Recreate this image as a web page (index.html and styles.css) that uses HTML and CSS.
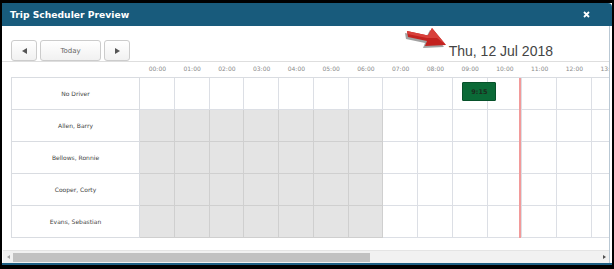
FILE: index.html
```html
<!DOCTYPE html>
<html lang="en">
<head>
    <meta charset="UTF-8">
    <meta name="viewport" content="width=device-width, initial-scale=1.0">
    <title>Trip Scheduler Preview</title>
    <link rel="stylesheet" href="styles.css">
</head>
<body>
    <div class="frame">
        <div class="dialog">
            <div class="dialog-header">
                <span class="dialog-title">Trip Scheduler Preview</span>
                <span class="dialog-close">
                    <svg width="7" height="7" viewBox="0 0 7 7"><path d="M1 1L6 6M6 1L1 6" stroke="#fff" stroke-width="1.8"/></svg>
                </span>
            </div>
            <div class="dialog-body">
                <div class="toolbar">
                    <button class="nav-btn"><span class="tri tri-left"></span></button>
                    <button class="nav-btn today-btn">Today</button>
                    <button class="nav-btn"><span class="tri tri-right"></span></button>
                    <div class="current-date">Thu, 12 Jul 2018</div>
                </div>
                <div class="scheduler">
                    <div class="time-header" id="timeHeader">
                        <div class="corner"></div>
                    </div>
                    <div class="sched-body" id="schedBody">
                        <div class="now-line"></div>
                    </div>
                </div>
                <div class="hscroll">
                    <div class="hscroll-btn"><span class="sb-tri sb-left"></span></div>
                    <div class="hscroll-thumb"></div>
                    <div class="hscroll-btn hscroll-end"><span class="sb-tri sb-right"></span></div>
                </div>
            </div>
        </div>
        <svg class="callout-arrow" width="56" height="32" viewBox="398 22 56 32">
            <polygon points="405,33 426,37.5 430,30 444,47 423,48 425,43 406,39" fill="#555" opacity="0.55"/>
            <polygon points="407,31 428,35.5 432,28 446,45 425,46 427,41 408,37" fill="#c3221f"/>
            <polygon points="407,31 428,35.5 432,28 446,45 437,38 427,38 407.5,34" fill="#d8403b"/>
        </svg>
    </div>

    <script>
        const drivers = ["No Driver", "Allen, Barry", "Bellows, Ronnie", "Cooper, Corty", "Evans, Sebastian"];
        const trips = [{ driver: 0, start: 9.25, label: "9:15" }];
        const visibleHours = 14;  // the rest is off to the right of the scroll area

        function buildHeader() {
            const header = document.getElementById("timeHeader");
            for (let h = 0; h < visibleHours; h++) {
                const cell = document.createElement("div");
                cell.className = "hour-label";
                cell.textContent = String(h).padStart(2, "0") + ":00";
                header.appendChild(cell);
            }
        }

        function buildRows() {
            const body = document.getElementById("schedBody");
            drivers.forEach((name, i) => {
                const row = document.createElement("div");
                row.className = "sched-row";
                row.innerHTML = `<div class="driver-cell">${name}</div>`;
                for (let h = 0; h < visibleHours; h++) {
                    const cell = document.createElement("div");
                    cell.className = "hour-cell";
                    if (i > 0 && h < 7) cell.classList.add("off-hours");
                    row.appendChild(cell);
                }
                trips.filter(t => t.driver === i).forEach(t => {
                    const trip = document.createElement("div");
                    trip.className = "trip";
                    trip.style.left = (129 + t.start * 34.75 + 1) + "px";
                    trip.textContent = t.label;
                    row.appendChild(trip);
                });
                body.appendChild(row);
            });
        }

        buildHeader();
        buildRows();
    </script>
</body>
</html>
```

FILE: styles.css
```css
body {
    margin: 0;
    background-color: #000000;
    font-family: "DejaVu Sans", Verdana, sans-serif;
}

.frame {
    position: relative;
    width: 614px;
    height: 269px;
    box-sizing: border-box;
    padding: 3px 2px 4px 2px;
    background-color: #000000;
}

.dialog {
    height: 100%;
    box-sizing: border-box;
    display: flex;
    flex-direction: column;
    background-color: #ffffff;
    border-bottom: 2px solid #1d6084;
    overflow: hidden;
}

.dialog-header {
    flex: none;
    height: 23px;
    display: flex;
    align-items: center;
    justify-content: space-between;
    padding: 0 22px 0 8px;
    background-color: #185b7c;
    border-radius: 0 4px 0 0;
}

.dialog-title {
    color: #ffffff;
    font-weight: bold;
    font-size: 9.2px;
}

.dialog-close {
    display: flex;
}

.dialog-body {
    flex: 1;
    display: flex;
    flex-direction: column;
    padding-top: 14px;
    min-height: 0;
    border-right: 1px solid #b9c8d4;
    margin-right: 2px;
}

.toolbar {
    flex: none;
    height: 21px;
    display: flex;
    align-items: flex-start;
    padding-left: 9px;
    border-bottom: 1px solid #dedede;
}

.nav-btn {
    height: 21px;
    width: 26px;
    margin: 0 3px 0 0;
    padding: 0;
    display: flex;
    align-items: center;
    justify-content: center;
    border: 1px solid #cccccc;
    border-radius: 3px;
    background: linear-gradient(#ffffff, #f1f1f1);
    font-family: "DejaVu Sans", Verdana, sans-serif;
    font-size: 7px;
    color: #666666;
}

.today-btn {
    width: 61px;
}

.tri {
    width: 0;
    height: 0;
    border-top: 3.5px solid transparent;
    border-bottom: 3.5px solid transparent;
}

.tri-left {
    border-right: 5px solid #555555;
}

.tri-right {
    border-left: 5px solid #555555;
}

.current-date {
    margin: 3px 56px 0 auto;
    font-family: "Liberation Sans", Arial, sans-serif;
    font-size: 14px;
    line-height: 16px;
    color: #444444;
}

.scheduler {
    flex: none;
    padding-left: 9px;
    overflow: hidden;
}

.time-header {
    display: flex;
    height: 15px;
}

.corner {
    flex: none;
    width: 129px;
}

.hour-label {
    flex: none;
    width: 34.75px;
    text-align: center;
    font-size: 6px;
    line-height: 13px;
    color: #8a8a8a;
}

.sched-body {
    position: relative;
    height: 160px;
    border-top: 1px solid #d9dce1;
    overflow: hidden;
}

.sched-row {
    position: relative;
    display: flex;
    height: 32px;
}

.driver-cell {
    flex: none;
    width: 129px;
    box-sizing: border-box;
    display: flex;
    align-items: center;
    justify-content: center;
    border-left: 1px solid #d9dce1;
    border-right: 1px solid #d9dce1;
    border-bottom: 1px solid #d9dce1;
    font-size: 6px;
    color: #444444;
}

.hour-cell {
    flex: none;
    width: 34.75px;
    box-sizing: border-box;
    border-right: 1px solid #dcdfe5;
    border-bottom: 1px solid #dcdfe5;
}

.hour-cell.off-hours {
    background-color: #e4e4e4;
    border-color: #cfcfcf;
}

.now-line {
    position: absolute;
    top: 0;
    bottom: 0;
    left: 508px;
    width: 2px;
    background-color: #f29a9a;
    z-index: 2;
}

.trip {
    position: absolute;
    top: 4px;
    width: 34px;
    height: 19px;
    box-sizing: border-box;
    display: flex;
    align-items: center;
    justify-content: center;
    background-color: #0b6a37;
    border: 1px solid #07512a;
    border-radius: 1px;
    font-size: 6.5px;
    font-weight: bold;
    color: #1c2c1e;
    z-index: 3;
}

.hscroll {
    flex: none;
    margin-top: auto;
    height: 12px;
    display: flex;
    align-items: center;
    margin-left: 1px;
    background-color: #f1f1f1;
    border-top: 1px solid #e4e4e4;
}

.hscroll-btn {
    flex: none;
    width: 10px;
    display: flex;
    justify-content: center;
}

.hscroll-end {
    margin-left: auto;
}

.sb-tri {
    width: 0;
    height: 0;
    border-top: 2.5px solid transparent;
    border-bottom: 2.5px solid transparent;
}

.sb-left {
    border-right: 3px solid #a3a3a3;
}

.sb-right {
    border-left: 3px solid #505050;
}

.hscroll-thumb {
    flex: none;
    width: 357px;
    height: 9px;
    background-color: #c1c1c1;
}

.callout-arrow {
    position: absolute;
    left: 398px;
    top: 22px;
}
```
